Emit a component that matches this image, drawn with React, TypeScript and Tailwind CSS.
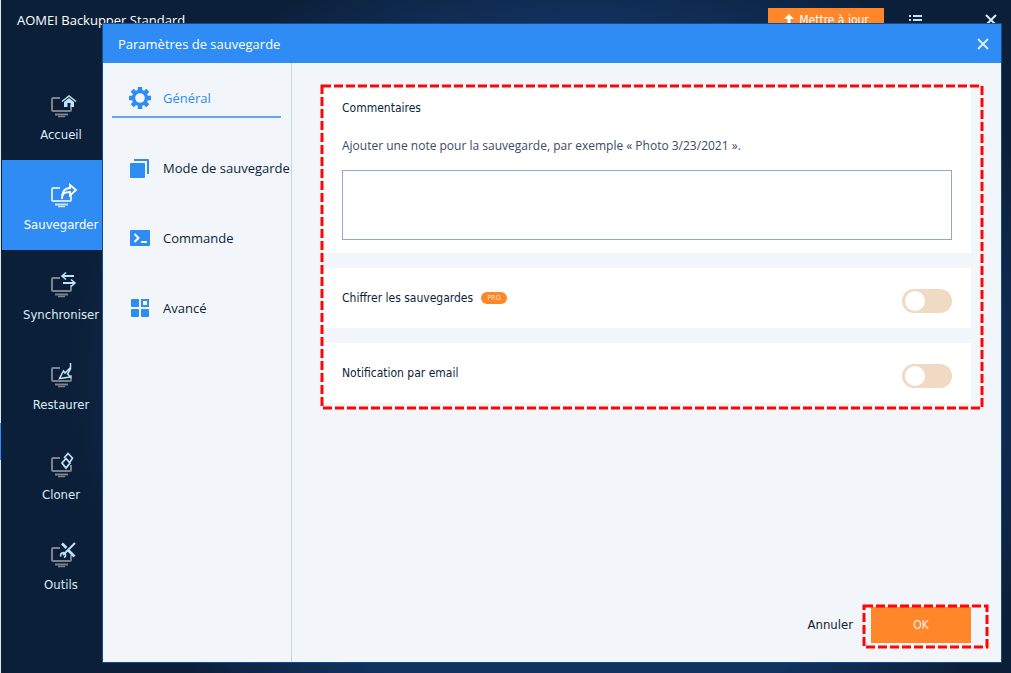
import React from 'react';

const Monitor = ({ children, active }) => (
  <svg width="28" height="28" viewBox="-2 0 28 28" fill="none" className="overflow-visible" aria-hidden="true">
    <g className={active ? 'stroke-[#cfe4fb]' : 'stroke-[#7b828e]'} strokeWidth="2" strokeLinejoin="round">
      <path d="M11 7H4a1 1 0 0 0-1 1v11a1 1 0 0 0 1 1h17a1 1 0 0 0 1-1v-5" />
      <path d="M6 23.500h13" />
      <path d="M9 25.500h7" strokeWidth="1.500" />
    </g>
    <g className={active ? 'stroke-white' : 'stroke-[#bfe4f7]'} strokeWidth="2">
      {children}
    </g>
  </svg>
);

const navItems = [
  {
    label: 'Accueil',
    icon: (
      <>
        <path d="M13 10.500l7-5.500 7 5.500" strokeWidth="1.500" />
        <path d="M15 11l5-4 5 4v5h-3.500v-4h-3v4H15z" className="fill-[#bfe4f7]" stroke="none" />
      </>
    ),
  },
  {
    label: 'Sauvegarder',
    icon: <path d="M13 18c0-5 2-7 8-7v3.500L27 9l-6-5v3c-5 0-8 4-8 11" strokeWidth="1.800" />,
  },
  {
    label: 'Synchroniser',
    icon: (
      <>
        <path d="M13 5h12M14 12h12" />
        <path d="M17 1.500L13 5l4 3.500M22 8.500l4 3.500-4 3.500" strokeWidth="1.600" />
      </>
    ),
  },
  {
    label: 'Restaurer',
    icon: <path d="M21.500 2v6l-3 5 3 3-11 1.500 4-7.500 1.500 2 5-5" strokeWidth="1.500" />,
  },
  {
    label: 'Cloner',
    icon: (
      <>
        <path d="M17 7.500l4 4.500-4 5-4-5z" strokeWidth="1.800" />
        <path d="M15 7l4-4.500L23.500 7 21 11" strokeWidth="1.600" />
      </>
    ),
  },
  {
    label: 'Outils',
    icon: (
      <>
        <path d="M26 2L14 14" />
        <path d="M13 2.500l4.500 4.500M19 9l6.500 6.500" strokeWidth="2.800" />
        <path d="M12 15.500a2.500 2.500 0 1 1 3 1" strokeWidth="1.600" />
      </>
    ),
  },
];

const GearIcon = () => (
  <svg width="22" height="22" viewBox="0 0 22 22" fill="none" stroke="#2f8cf5" className="shrink-0" aria-hidden="true">
    <circle cx="11" cy="11" r="6.500" strokeWidth="3.400" />
    <path
      d="M11 0v4M11 18v4M0 11h4M18 11h4M3.200 3.200l3 3M15.800 15.800l3 3M18.800 3.200l-3 3M6.200 15.800l-3 3"
      strokeWidth="4.400"
    />
  </svg>
);

const CopyIcon = () => (
  <svg width="22" height="22" viewBox="0 0 22 22" fill="#2f8cf5" className="shrink-0" aria-hidden="true">
    <rect x="1" y="6" width="15" height="15" rx="1" />
    <path d="M5 2h14a1 1 0 0 1 1 1v14h-2V4H5z" />
  </svg>
);

const CommandIcon = () => (
  <svg width="22" height="22" viewBox="0 0 22 22" fill="none" className="shrink-0" aria-hidden="true">
    <rect x="1" y="3" width="20" height="16" rx="1" fill="#2f8cf5" />
    <path d="M5.500 7l4 4-4 4M12 15h6" stroke="#fff" strokeWidth="2" />
  </svg>
);

const GridIcon = () => (
  <svg width="22" height="22" viewBox="0 0 22 22" fill="#2f8cf5" className="shrink-0" aria-hidden="true">
    <rect x="2" y="2" width="8" height="8" rx="1" />
    <rect x="2" y="12" width="8" height="8" rx="1" />
    <rect x="12" y="12" width="8" height="8" rx="1" />
    <rect x="13" y="3" width="6" height="6" fill="none" stroke="#2f8cf5" strokeWidth="2" />
  </svg>
);

const tabs = [
  { label: 'Général', icon: <GearIcon /> },
  { label: 'Mode de sauvegarde', icon: <CopyIcon /> },
  { label: 'Commande', icon: <CommandIcon /> },
  { label: 'Avancé', icon: <GridIcon /> },
];

const CloseIcon = () => (
  <svg width="12" height="12" viewBox="0 0 12 12" stroke="#d3eefb" strokeWidth="2" aria-hidden="true">
    <path d="M1 1l10 10M11 1L1 11" />
  </svg>
);

// red dashed marker drawn over the edge of its parent
const Highlight = ({ className }) => (
  <svg className={`absolute overflow-visible pointer-events-none ${className}`} aria-hidden="true">
    <rect width="100%" height="100%" fill="none" stroke="#ff0505" strokeWidth="3" strokeDasharray="9 3" />
  </svg>
);

const Toggle = ({ id }) => (
  <span className="relative mt-1.5 h-6 w-[50px]">
    <input
      id={id}
      type="checkbox"
      className="peer block h-6 w-[50px] appearance-none rounded-full bg-[#f0dac4] checked:bg-[#ff8629]"
    />
    <span className="pointer-events-none absolute left-[3px] top-0.5 size-5 rounded-full bg-white peer-checked:left-[27px]"></span>
  </span>
);

const OptionCard = ({ id, label, pro }) => (
  <div className="flex h-[60px] items-center justify-between bg-white pl-5 pr-[19px]">
    <div className="flex items-center gap-2">
      <label htmlFor={id} className="text-xs">{label}</label>
      {pro && (
        <span className="flex h-3 w-[26px] items-center justify-center rounded-full bg-[#ff8629] text-[7px] text-[#ffe3cb]">
          PRO
        </span>
      )}
    </div>
    <Toggle id={id} />
  </div>
);

const SettingsDialog = () => (
  <div
    role="dialog"
    aria-labelledby="dialog-title"
    className="absolute bottom-[10px] left-[101px] right-[9px] top-[23px] flex flex-col border border-[#0f4c92] bg-[#f2f5fa]"
  >
    <header className="flex h-[39px] shrink-0 items-center justify-between bg-[#2f8cf5] pl-[15px] pr-3 text-white">
      <h2 id="dialog-title" className="font-['Open_Sans',sans-serif] text-[13px] leading-5">Paramètres de sauvegarde</h2>
      <button type="button" aria-label="Fermer">
        <CloseIcon />
      </button>
    </header>

    <div className="flex min-h-0 grow">
      <nav className="flex w-[189px] shrink-0 flex-col gap-[30px] border-r border-[#c3dadf] pl-[9px] pr-2.5 pt-[15px]">
        {tabs.map(({ label, icon }, key) => (
          <button
            type="button"
            key={`tab-key-${key}`}
            className={`flex h-10 items-center gap-3 whitespace-nowrap border-b-2 pl-[17px] pt-0.5 font-['Open_Sans',sans-serif] text-[13px] leading-5 ${
              key === 0 ? 'border-[#62a9f5] text-[#2f8cf5]' : 'border-transparent'
            }`}
          >
            {icon}
            {label}
          </button>
        ))}
      </nav>

      <div className="flex grow flex-col justify-between pb-[19px] pl-[30px] pr-[30px] pt-[23px]">
        <div className="relative flex flex-col gap-[15px]">
          <div className="h-[167px] bg-white pl-5 pr-[19px] pt-3">
            <h3 className="text-xs leading-5">Commentaires</h3>
            <label
              htmlFor="note"
              className="mt-[18px] block font-['Open_Sans',sans-serif] text-xs leading-5 text-[#3a4b63]"
            >
              Ajouter une note pour la sauvegarde, par exemple « Photo 3/23/2021 ».
            </label>
            <textarea id="note" className="mt-3.5 block h-[70px] w-full resize-none border border-[#8aaad2] bg-white"></textarea>
          </div>
          <OptionCard id="encrypt" label="Chiffrer les sauvegardes" pro />
          <OptionCard id="email" label="Notification par email" pro={false} />
          <Highlight className="left-0 top-0 h-[calc(100%+5px)] w-[calc(100%+11px)]" />
        </div>

        <div className="flex items-center justify-end gap-[18px]">
          <button type="button" className="text-[13px] leading-5">Annuler</button>
          <div className="relative">
            <button type="button" className="block h-9 w-[100px] bg-[#ff8629] text-xs text-[#fff1e4]">
              OK
            </button>
            <Highlight className="-left-[7px] -top-px h-[41px] w-[123px]" />
          </div>
        </div>
      </div>
    </div>
  </div>
);

const App = () => (
  <div className="relative flex min-h-screen flex-col border-l border-[#dfe6ee] bg-[#0c1f38] bg-[radial-gradient(50%_68%_at_57%_56%,#11325f_75%,#0c1f38_100%)] font-['DejaVu_Sans_Condensed','Open_Sans',sans-serif] text-[#0c1f38]">
    <header className="flex h-[70px] items-start justify-between pl-4 pr-3.5 pt-2">
      <h1 className="font-['Open_Sans',sans-serif] text-[13px] leading-6 text-white">AOMEI Backupper Standard</h1>
      <div className="flex items-start text-[#dff1fb]">
        <button type="button" className="mr-[25px] flex h-6 w-[116px] items-center justify-center gap-1 bg-[#ff8629] text-xs text-white">
          <svg width="12" height="14" viewBox="0 0 12 14" fill="#fff" aria-hidden="true">
            <path d="M6 1l5 5H7.500v8h-3V6H1z" />
          </svg>
          Mettre à jour
        </button>
        <button type="button" aria-label="Menu" className="mr-[63px] mt-1.5">
          <svg width="13" height="12" viewBox="0 0 13 12" fill="#bfe4f7" aria-hidden="true">
            <path d="M0 1h2v2H0zM4 1h9v2H4zM0 5h2v2H0zM4 5h9v2H4zM0 9h2v2H0zM4 9h9v2H4z" />
          </svg>
        </button>
        <button type="button" aria-label="Quitter" className="mt-1.5">
          <CloseIcon />
        </button>
      </div>
    </header>

    <nav className="ml-px flex w-[118px] grow flex-col">
      {navItems.map(({ label, icon }, key) => (
        <a
          href="#"
          key={`nav-key-${key}`}
          className={`flex h-[90px] flex-col items-center pt-[21px] text-[13px] leading-5 ${
            key === 1 ? 'bg-[#2f8cf5] text-white' : 'text-[#dcecf8]'
          }`}
        >
          <Monitor active={key === 1}>{icon}</Monitor>
          <span className="mt-1.5">{label}</span>
        </a>
      ))}
    </nav>

    <span className="absolute -left-px top-[423px] h-[37px] w-px bg-[#2f8cf5]"></span>
    <SettingsDialog />
  </div>
);

export default App;
